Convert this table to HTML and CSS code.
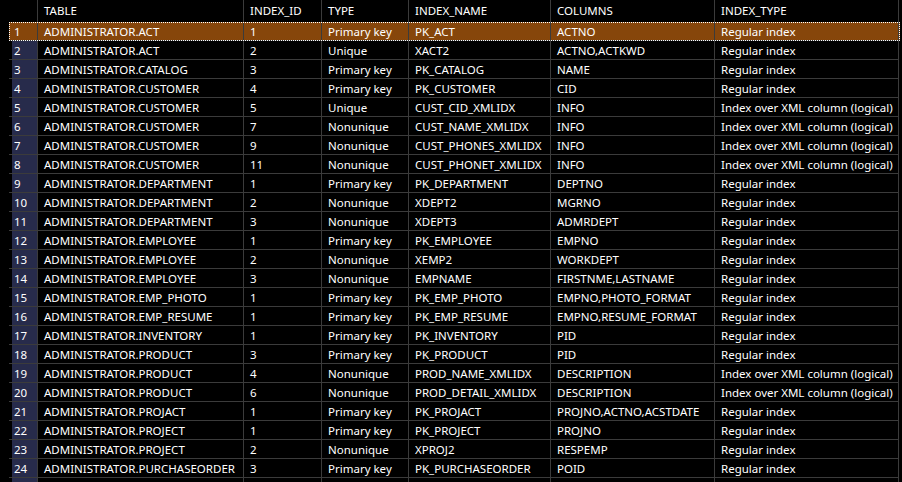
FILE: index.html
```html
<!DOCTYPE html>
<html>
<head>
<meta charset="utf-8">
<link rel="stylesheet" href="styles.css">
</head>
<body>
<div class="grid">
  <div class="row head">
    <div class="c num"></div><div class="c">TABLE</div><div class="c">INDEX_ID</div><div class="c">TYPE</div><div class="c">INDEX_NAME</div><div class="c">COLUMNS</div><div class="c">INDEX_TYPE</div>
  </div>
  <div class="row sel">
    <div class="c num">1</div><div class="c">ADMINISTRATOR.ACT</div><div class="c">1</div><div class="c">Primary key</div><div class="c">PK_ACT</div><div class="c">ACTNO</div><div class="c">Regular index</div>
  </div>
  <div class="row">
    <div class="c num">2</div><div class="c">ADMINISTRATOR.ACT</div><div class="c">2</div><div class="c">Unique</div><div class="c">XACT2</div><div class="c">ACTNO,ACTKWD</div><div class="c">Regular index</div>
  </div>
  <div class="row">
    <div class="c num">3</div><div class="c">ADMINISTRATOR.CATALOG</div><div class="c">3</div><div class="c">Primary key</div><div class="c">PK_CATALOG</div><div class="c">NAME</div><div class="c">Regular index</div>
  </div>
  <div class="row">
    <div class="c num">4</div><div class="c">ADMINISTRATOR.CUSTOMER</div><div class="c">4</div><div class="c">Primary key</div><div class="c">PK_CUSTOMER</div><div class="c">CID</div><div class="c">Regular index</div>
  </div>
  <div class="row">
    <div class="c num">5</div><div class="c">ADMINISTRATOR.CUSTOMER</div><div class="c">5</div><div class="c">Unique</div><div class="c">CUST_CID_XMLIDX</div><div class="c">INFO</div><div class="c">Index over XML column (logical)</div>
  </div>
  <div class="row">
    <div class="c num">6</div><div class="c">ADMINISTRATOR.CUSTOMER</div><div class="c">7</div><div class="c">Nonunique</div><div class="c">CUST_NAME_XMLIDX</div><div class="c">INFO</div><div class="c">Index over XML column (logical)</div>
  </div>
  <div class="row">
    <div class="c num">7</div><div class="c">ADMINISTRATOR.CUSTOMER</div><div class="c">9</div><div class="c">Nonunique</div><div class="c">CUST_PHONES_XMLIDX</div><div class="c">INFO</div><div class="c">Index over XML column (logical)</div>
  </div>
  <div class="row">
    <div class="c num">8</div><div class="c">ADMINISTRATOR.CUSTOMER</div><div class="c">11</div><div class="c">Nonunique</div><div class="c">CUST_PHONET_XMLIDX</div><div class="c">INFO</div><div class="c">Index over XML column (logical)</div>
  </div>
  <div class="row">
    <div class="c num">9</div><div class="c">ADMINISTRATOR.DEPARTMENT</div><div class="c">1</div><div class="c">Primary key</div><div class="c">PK_DEPARTMENT</div><div class="c">DEPTNO</div><div class="c">Regular index</div>
  </div>
  <div class="row">
    <div class="c num">10</div><div class="c">ADMINISTRATOR.DEPARTMENT</div><div class="c">2</div><div class="c">Nonunique</div><div class="c">XDEPT2</div><div class="c">MGRNO</div><div class="c">Regular index</div>
  </div>
  <div class="row">
    <div class="c num">11</div><div class="c">ADMINISTRATOR.DEPARTMENT</div><div class="c">3</div><div class="c">Nonunique</div><div class="c">XDEPT3</div><div class="c">ADMRDEPT</div><div class="c">Regular index</div>
  </div>
  <div class="row">
    <div class="c num">12</div><div class="c">ADMINISTRATOR.EMPLOYEE</div><div class="c">1</div><div class="c">Primary key</div><div class="c">PK_EMPLOYEE</div><div class="c">EMPNO</div><div class="c">Regular index</div>
  </div>
  <div class="row">
    <div class="c num">13</div><div class="c">ADMINISTRATOR.EMPLOYEE</div><div class="c">2</div><div class="c">Nonunique</div><div class="c">XEMP2</div><div class="c">WORKDEPT</div><div class="c">Regular index</div>
  </div>
  <div class="row">
    <div class="c num">14</div><div class="c">ADMINISTRATOR.EMPLOYEE</div><div class="c">3</div><div class="c">Nonunique</div><div class="c">EMPNAME</div><div class="c">FIRSTNME,LASTNAME</div><div class="c">Regular index</div>
  </div>
  <div class="row">
    <div class="c num">15</div><div class="c">ADMINISTRATOR.EMP_PHOTO</div><div class="c">1</div><div class="c">Primary key</div><div class="c">PK_EMP_PHOTO</div><div class="c">EMPNO,PHOTO_FORMAT</div><div class="c">Regular index</div>
  </div>
  <div class="row">
    <div class="c num">16</div><div class="c">ADMINISTRATOR.EMP_RESUME</div><div class="c">1</div><div class="c">Primary key</div><div class="c">PK_EMP_RESUME</div><div class="c">EMPNO,RESUME_FORMAT</div><div class="c">Regular index</div>
  </div>
  <div class="row">
    <div class="c num">17</div><div class="c">ADMINISTRATOR.INVENTORY</div><div class="c">1</div><div class="c">Primary key</div><div class="c">PK_INVENTORY</div><div class="c">PID</div><div class="c">Regular index</div>
  </div>
  <div class="row">
    <div class="c num">18</div><div class="c">ADMINISTRATOR.PRODUCT</div><div class="c">3</div><div class="c">Primary key</div><div class="c">PK_PRODUCT</div><div class="c">PID</div><div class="c">Regular index</div>
  </div>
  <div class="row">
    <div class="c num">19</div><div class="c">ADMINISTRATOR.PRODUCT</div><div class="c">4</div><div class="c">Nonunique</div><div class="c">PROD_NAME_XMLIDX</div><div class="c">DESCRIPTION</div><div class="c">Index over XML column (logical)</div>
  </div>
  <div class="row">
    <div class="c num">20</div><div class="c">ADMINISTRATOR.PRODUCT</div><div class="c">6</div><div class="c">Nonunique</div><div class="c">PROD_DETAIL_XMLIDX</div><div class="c">DESCRIPTION</div><div class="c">Index over XML column (logical)</div>
  </div>
  <div class="row">
    <div class="c num">21</div><div class="c">ADMINISTRATOR.PROJACT</div><div class="c">1</div><div class="c">Primary key</div><div class="c">PK_PROJACT</div><div class="c">PROJNO,ACTNO,ACSTDATE</div><div class="c">Regular index</div>
  </div>
  <div class="row">
    <div class="c num">22</div><div class="c">ADMINISTRATOR.PROJECT</div><div class="c">1</div><div class="c">Primary key</div><div class="c">PK_PROJECT</div><div class="c">PROJNO</div><div class="c">Regular index</div>
  </div>
  <div class="row">
    <div class="c num">23</div><div class="c">ADMINISTRATOR.PROJECT</div><div class="c">2</div><div class="c">Nonunique</div><div class="c">XPROJ2</div><div class="c">RESPEMP</div><div class="c">Regular index</div>
  </div>
  <div class="row">
    <div class="c num">24</div><div class="c">ADMINISTRATOR.PURCHASEORDER</div><div class="c">3</div><div class="c">Primary key</div><div class="c">PK_PURCHASEORDER</div><div class="c">POID</div><div class="c">Regular index</div>
  </div>
  <div class="row">
    <div class="c num"></div><div class="c"></div><div class="c"></div><div class="c"></div><div class="c"></div><div class="c"></div><div class="c"></div>
  </div>
</div>
</body>
</html>
```
FILE: styles.css
```css
html, body {
  margin: 0;
  padding: 0;
  background: #000;
  height: 482px;
  overflow: hidden;
}
body {
  font-family: "Noto Sans", "Open Sans", sans-serif;
  font-size: 11.5px;
  color: #ffffff;
}
.grid {
  margin-left: 9px;
  width: 891px;
}
.row {
  display: grid;
  grid-template-columns: 29px 206px 78px 87px 142px 164px 184px 1px;
  height: 19px;
}
.row.head {
  height: 22px;
}
.c {
  box-sizing: border-box;
  border-right: 1px solid #3b3b3b;
  border-bottom: 1px solid #3b3b3b;
  padding-left: 6px;
  padding-top: 1px;
  white-space: nowrap;
  overflow: hidden;
  display: flex;
  align-items: center;
  line-height: 1;
}
.row.head .c {
  border-bottom: none;
  padding-top: 0;
}
.c.num {
  padding-left: 5px;
  background: linear-gradient(to right, #000 3px, #272b4b 3px);
}
.row.head .c.num {
  background: #000;
}
.row.sel {
  background: #86460b;
  outline: 1px dotted #ffffff;
  outline-offset: -1px;
}
.row.sel .c.num {
  background: transparent;
}
```
